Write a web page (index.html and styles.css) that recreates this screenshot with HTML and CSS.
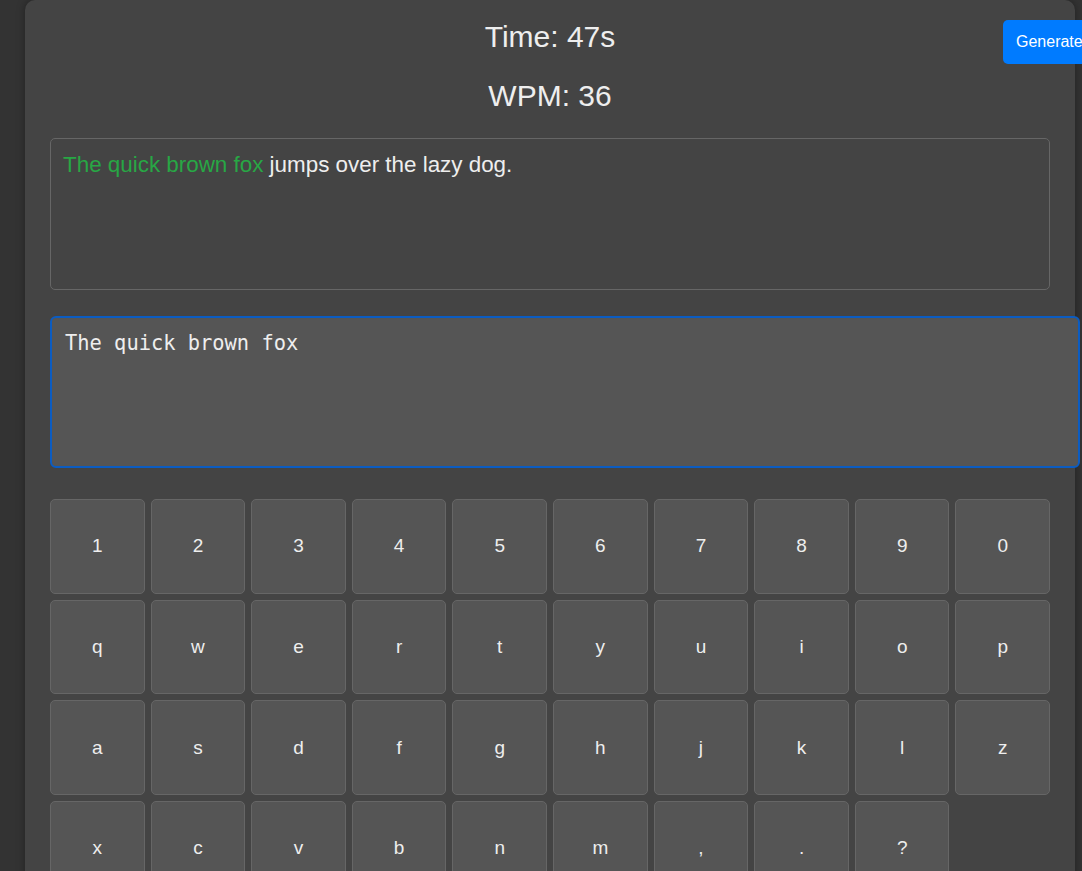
FILE: index.html
```html
<!DOCTYPE html>
<html lang="en">
<head>
<meta charset="utf-8">
<title>Typing Test</title>
<link rel="stylesheet" href="styles.css">
</head>
<body>
<main class="app">
  <section class="stats">
    <div class="stat">Time: 47s</div>
    <div class="stat">WPM: 36</div>
  </section>
  <div class="display"><span class="correct">The quick brown fox</span> jumps over the lazy dog.</div>
  <textarea class="input">The quick brown fox</textarea>
  <section class="keyboard">
    <button class="key">1</button><button class="key">2</button><button class="key">3</button><button class="key">4</button><button class="key">5</button><button class="key">6</button><button class="key">7</button><button class="key">8</button><button class="key">9</button><button class="key">0</button>
    <button class="key">q</button><button class="key">w</button><button class="key">e</button><button class="key">r</button><button class="key">t</button><button class="key">y</button><button class="key">u</button><button class="key">i</button><button class="key">o</button><button class="key">p</button>
    <button class="key">a</button><button class="key">s</button><button class="key">d</button><button class="key">f</button><button class="key">g</button><button class="key">h</button><button class="key">j</button><button class="key">k</button><button class="key">l</button><button class="key">z</button>
    <button class="key">x</button><button class="key">c</button><button class="key">v</button><button class="key">b</button><button class="key">n</button><button class="key">m</button><button class="key">,</button><button class="key">.</button><button class="key">?</button>
  </section>
</main>
<button class="generate">Generate Text</button>
</body>
</html>
```
FILE: styles.css
```css
html {
  overflow: hidden;
}

body {
  margin: 0;
  background: #333333;
  font-family: "Liberation Sans", Arial, sans-serif;
  color: #eeeeee;
}

.app {
  box-sizing: border-box;
  width: 1050px;
  min-height: 900px;
  margin-left: 25px;
  padding: 20px 25px 0;
  background: #444444;
  border-radius: 10px;
  box-shadow: 0 0 8px rgba(0, 0, 0, 0.35);
}

.stats {
  display: flex;
  flex-direction: column;
  gap: 25px;
  text-align: center;
}

.stat {
  font-size: 30px;
  line-height: 34px;
  color: #eeeeee;
}

.display {
  box-sizing: border-box;
  height: 152px;
  margin-top: 25px;
  padding: 13px 12px 10px;
  border: 1px solid #666666;
  border-radius: 5px;
  font-size: 22.4px;
  color: #eeeeee;
}

.correct {
  color: #28a745;
}

.input {
  display: block;
  box-sizing: border-box;
  width: 1030px;
  height: 152px;
  margin: 26px 0 0;
  padding: 13px;
  border: 2px solid #0b5cc2;
  border-radius: 6px;
  outline: none;
  resize: none;
  background: #555555;
  color: #eeeeee;
  font-family: "DejaVu Sans Mono", "Liberation Mono", monospace;
  font-size: 20.4px;
}

.keyboard {
  display: grid;
  grid-template-columns: repeat(10, 1fr);
  gap: 6px;
  margin-top: 31px;
}

.key {
  aspect-ratio: 1 / 1;
  display: flex;
  align-items: center;
  justify-content: center;
  padding: 0;
  background: #555555;
  border: 1px solid #666666;
  border-radius: 5px;
  color: #eeeeee;
  font-family: "Liberation Sans", Arial, sans-serif;
  font-size: 19px;
}

.generate {
  position: absolute;
  top: 20px;
  left: 1003px;
  padding: 12px 13px;
  border: none;
  border-radius: 5px;
  background: #007bff;
  color: #ffffff;
  font-family: "Liberation Sans", Arial, sans-serif;
  font-size: 16px;
  line-height: 20px;
  white-space: nowrap;
}
```
